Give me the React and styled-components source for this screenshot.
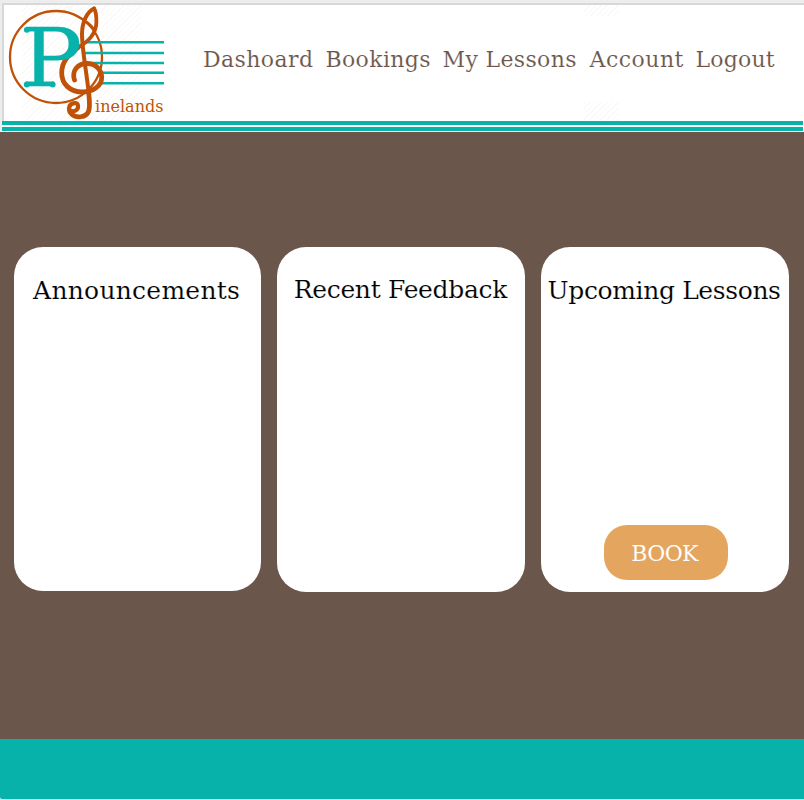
import React from "react";
import styled, { createGlobalStyle } from "styled-components";

const teal = "#07b2aa";
const rust = "#c05208";
const slab = '"DejaVu Serif", serif';

const GlobalStyle = createGlobalStyle`
  * { box-sizing: border-box; }
  body { margin: 0; background: #ededee; font-family: ${slab}; }
`;

const Page = styled.div`
  width: 804px;
  height: 800px;
  overflow: hidden;
  display: flex;
  flex-direction: column;
  padding-top: 3px;
`;

const Header = styled.header`
  height: 118px;
  margin-left: 2px;
  flex: none;
  display: flex;
  border-top: 2px solid #d8d8d8;
  border-left: 2px solid #d8d8d8;
  background-color: #fff;
  background-image: repeating-linear-gradient(135deg, #fbf9f8 0 1px, #fff 1px 4px),
    repeating-linear-gradient(135deg, #fbf9f8 0 1px, #fff 1px 4px),
    repeating-linear-gradient(135deg, #fbf9f7 0 1px, #fff 1px 4px);
  background-repeat: no-repeat;
  background-size: 35px 11px, 35px 19px, 119px 116px;
  background-position: 580px 0, 580px 97px, 18px 0;
`;

const LogoArt = styled.svg`
  flex: none;
  width: 166px;
  height: 116px;
  display: block;
`;

const Nav = styled.nav`
  display: flex;
  gap: 12px;
  margin: 40px 0 0 33px;
  height: 30px;
`;

const NavLink = styled.a`
  width: ${(p) => p.$width}px;
  flex: none;
  font-size: 22px;
  line-height: 30px;
  letter-spacing: ${(p) => p.$tracking}px;
  white-space: nowrap;
  color: #6b564b;
  -webkit-text-stroke: 0.12px #fff;
`;

const Rules = styled.div`
  flex: none;
  height: 11px;
  margin-left: 2px;
  background: #fff;
  border-right: 1px solid #fff;
  display: flex;
  flex-direction: column;
  gap: 2px;
`;

const Rule = styled.div`
  height: 4px;
  background: ${teal};
`;

const Main = styled.main`
  flex: none;
  height: 607px;
  background: #6a564b;
  padding: 114.6px 0 0 14.4px;
  display: flex;
  align-items: flex-start;
  gap: 16px;
`;

const Card = styled.section`
  width: ${(p) => p.$width}px;
  flex: none;
  height: ${(p) => p.$height}px;
  margin-top: ${(p) => p.$drop}px;
  border-radius: 29px;
  background: #fff;
  display: flex;
  flex-direction: column;
  align-items: center;
  justify-content: space-between;
  padding: 25.6px 0 12.5px;
`;

const CardTitle = styled.h2`
  margin: 0 ${(p) => p.$shift}px 0 0;
  font-size: 25px;
  line-height: 36px;
  font-weight: 400;
  letter-spacing: ${(p) => p.$tracking}px;
  white-space: nowrap;
  color: #000;
  -webkit-text-stroke: 0.15px #fff;
`;

const BookButton = styled.button`
  width: 124px;
  height: 55px;
  border: 0;
  border-radius: 23px;
  padding: 2px 2px 0 0;
  margin-left: 1px;
  background: #e4a65e;
  color: #fff;
  font: 22px ${slab};
  letter-spacing: -0.6px;
  -webkit-text-stroke: 0.1px #e4a65e;
`;

const Footer = styled.footer`
  flex: none;
  height: 60px;
  background: ${teal};
  border-bottom-left-radius: 2px;
`;

const links = [
  { label: "Dashoard", width: 110.5, tracking: 0.4 },
  { label: "Bookings", width: 105, tracking: 0.35 },
  { label: "My Lessons", width: 135, tracking: 0.35 },
  { label: "Account", width: 94, tracking: 0.5 },
  { label: "Logout", width: 80, tracking: 0.2 },
];

function Logo() {
  return (
    <LogoArt viewBox="4 5 166 116" aria-label="Pinelands">
      <circle cx="56" cy="57" r="46" fill="none" stroke={rust} strokeWidth="2.3" />
      <path stroke={teal} strokeWidth="2.6" d="M86 42.3H164M84 53H164M92 63H164M102 72.8H164M100 83.3H164" />
      <g fill="none" stroke={rust} strokeLinecap="round" strokeLinejoin="round">
        <path strokeWidth="4.8" d="M74.5 80C71.5 71 77.5 63.5 87 63.5C96 63.5 101.7 70 101.7 77.5C101.7 86 93 92 82.5 92C70 92 61.7 84 61.7 73C61.7 62 68 55 78 47.5" />
        <path strokeWidth="3.8" d="M78 47.5C88 42 96.2 34 96.4 22C96.4 16 95.5 10.5 94 8.5" />
        <path strokeWidth="4" d="M94 8.5C87 12 82 22 82 34C82 49 86.5 72 88.5 91" />
        <path strokeWidth="4.8" d="M88.5 91C89.4 100 90.5 107 88.5 111.5C86 117.5 76.5 118.5 72 114.5" />
        <path strokeWidth="4.2" d="M72 114.5C67.5 111.5 68 104 74 103.2C77 102.8 78 104 78 106C78.5 110 74 112.5 70.5 110.5" />
        <path strokeWidth="2.2" d="M84 20.5C88 22 91 25 93.5 28.5" />
      </g>
      <text
        transform="translate(21 86) scale(1.14 1)"
        fontSize="80"
        fontFamily="DejaVu Serif, serif"
        fill={teal}
        stroke={teal}
        strokeWidth="0.3"
        strokeLinejoin="round"
      >
        P
      </text>
      <g fill={teal}>
        <circle cx="26.8" cy="29.8" r="2.9" />
        <circle cx="26.8" cy="84.5" r="2.9" />
        <circle cx="52.7" cy="84.5" r="2.9" />
      </g>
      <text x="95" y="111.8" fontSize="16.2" textLength="68.5" lengthAdjust="spacingAndGlyphs" fontFamily="DejaVu Serif, serif" fill={rust}>
        inelands
      </text>
    </LogoArt>
  );
}

export default function App() {
  return (
    <>
      <GlobalStyle />
      <Page>
        <Header>
          <Logo />
          <Nav>
            {links.map((l) => (
              <NavLink key={l.label} $width={l.width} $tracking={l.tracking}>{l.label}</NavLink>
            ))}
          </Nav>
        </Header>
        <Rules>
          <Rule />
          <Rule />
        </Rules>
        <Main>
          <Card $width={247} $height={344.5} $drop={0.4}>
            <CardTitle $tracking={0.25} $shift={2.5}>Announcements</CardTitle>
          </Card>
          <Card $width={248} $height={345.5} $drop={-0.1}>
            <CardTitle $tracking={-0.32} $shift={2}>Recent Feedback</CardTitle>
          </Card>
          <Card $width={247.4} $height={345.5} $drop={0.4}>
            <CardTitle $tracking={-0.37} $shift={2}>Upcoming Lessons</CardTitle>
            <BookButton>BOOK</BookButton>
          </Card>
        </Main>
        <Footer />
      </Page>
    </>
  );
}
